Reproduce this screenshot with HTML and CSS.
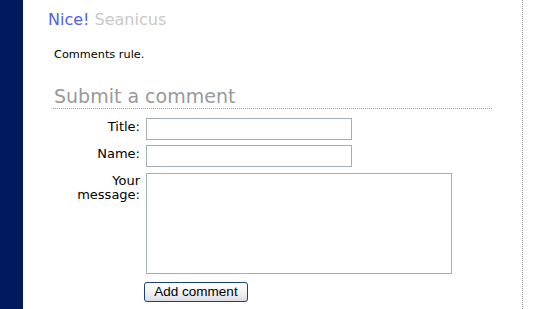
FILE: index.html
```html
<!DOCTYPE html>
<html>
<head>
<meta charset="utf-8">
<link rel="stylesheet" href="styles.css">
</head>
<body>
<div class="sidebar"></div>
<div class="main">
  <h2 class="post-title"><span class="nice">Nice!</span> <span class="author">Seanicus</span></h2>
  <p class="comment-body">Comments rule.</p>
  <h3 class="section-head">Submit a comment</h3>
  <form class="comment-form">
    <label class="lbl" for="t">Title:</label>
    <input class="field" id="t" type="text">
    <label class="lbl" for="n">Name:</label>
    <input class="field" id="n" type="text">
    <label class="lbl" for="m">Your message:</label>
    <textarea class="msg" id="m"></textarea>
    <span></span>
    <div class="btn-row"><button class="btn" type="button">Add comment</button></div>
  </form>
</div>
</body>
</html>
```
FILE: styles.css
```css
html, body {
  margin: 0;
  padding: 0;
  background: #fff;
}
body {
  display: flex;
  min-height: 309px;
  font-family: "DejaVu Sans", Verdana, sans-serif;
  color: #000;
}
.sidebar {
  width: 23px;
  flex: none;
  background: #001a5e;
}
.main {
  width: 474px;
  flex: none;
  padding-left: 25px;
  border-right: 1px dotted #999;
}
.post-title {
  margin: 10px 0 0;
  font-size: 16px;
  line-height: 20px;
  font-weight: normal;
}
.nice { color: #5262dc; }
.author { color: #c8c8c8; }
.comment-body {
  margin: 18px 0 0 6px;
  font-size: 11.3px;
  line-height: 14px;
}
.section-head {
  margin: 23px 0 0 5px;
  padding-left: 1px;
  width: 438px;
  font-size: 19px;
  line-height: 23px;
  font-weight: normal;
  color: #999;
  border-bottom: 1px dotted #999;
}
.comment-form {
  display: grid;
  grid-template-columns: 92px auto;
  column-gap: 6px;
  row-gap: 5px;
  margin-top: 9px;
  align-items: start;
}
.lbl {
  justify-self: end;
  max-width: 68px;
  text-align: right;
  font-size: 13px;
  line-height: 14px;
  padding-top: 2px;
}
.field {
  box-sizing: border-box;
  width: 206px;
  height: 22px;
  margin: 0;
  border: 1px solid #a5acb2;
  background: #fff;
  padding: 0 2px;
}
.msg {
  box-sizing: border-box;
  width: 306px;
  height: 101px;
  margin: 1px 0 0;
  border: 1px solid #a5acb2;
  resize: none;
  padding: 2px;
}
.btn-row {
  margin: 2px 0 0 -2px;
}
.btn {
  box-sizing: border-box;
  width: 104px;
  height: 20px;
  padding: 0;
  margin: 0;
  font-family: "Liberation Sans", Arial, sans-serif;
  font-size: 13.5px;
  line-height: 18px;
  color: #000;
  border: 1px solid #1c3f75;
  border-radius: 3px;
  background: linear-gradient(#ffffff 0%, #f4f4f6 45%, #dcdce6 100%);
}
```
